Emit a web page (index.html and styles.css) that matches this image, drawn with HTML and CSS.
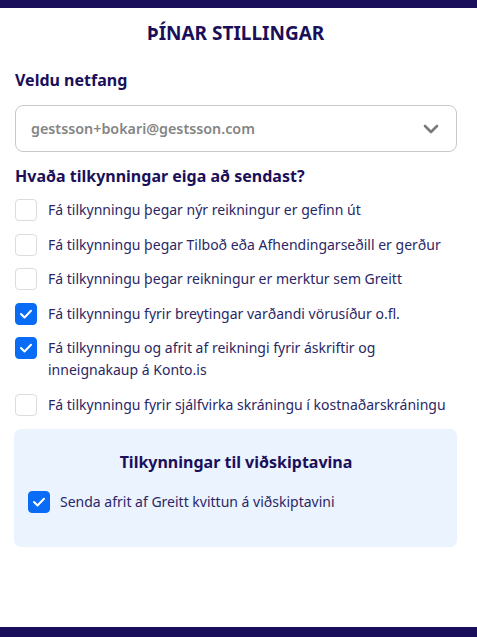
FILE: index.html
```html
<!DOCTYPE html>
<html lang="is">
<head>
<meta charset="utf-8">
<link rel="stylesheet" href="styles.css">
</head>
<body>
<div class="page">
  <div class="topbar"></div>
  <main class="content">
    <h1 class="title">ÞÍNAR STILLINGAR</h1>
    <h2 class="label">Veldu netfang</h2>
    <div class="select">
      <span class="select-value">gestsson+bokari@gestsson.com</span>
      <svg class="chevron" width="16" height="10" viewBox="0 0 16 10"><path d="M2 2 L8 8 L14 2" fill="none" stroke="#7a7a7a" stroke-width="2.6" stroke-linecap="round" stroke-linejoin="round"/></svg>
    </div>
    <h2 class="label label-q">Hvaða tilkynningar eiga að sendast?</h2>
    <ul class="options">
      <li class="opt"><span class="box"></span><span class="text">Fá tilkynningu þegar nýr reikningur er gefinn út</span></li>
      <li class="opt"><span class="box"></span><span class="text">Fá tilkynningu þegar Tilboð eða Afhendingarseðill er gerður</span></li>
      <li class="opt"><span class="box"></span><span class="text">Fá tilkynningu þegar reikningur er merktur sem Greitt</span></li>
      <li class="opt"><span class="box checked"><svg width="14" height="10" viewBox="0 0 14 10"><path d="M2 5 L5.5 8.5 L12 1.8" fill="none" stroke="#fff" stroke-width="2" stroke-linecap="round" stroke-linejoin="round"/></svg></span><span class="text">Fá tilkynningu fyrir breytingar varðandi vörusíður o.fl.</span></li>
      <li class="opt"><span class="box checked"><svg width="14" height="10" viewBox="0 0 14 10"><path d="M2 5 L5.5 8.5 L12 1.8" fill="none" stroke="#fff" stroke-width="2" stroke-linecap="round" stroke-linejoin="round"/></svg></span><span class="text">Fá tilkynningu og afrit af reikningi fyrir áskriftir og inneignakaup á Konto.is</span></li>
      <li class="opt"><span class="box"></span><span class="text">Fá tilkynningu fyrir sjálfvirka skráningu í kostnaðarskráningu</span></li>
    </ul>
    <section class="panel">
      <h3 class="panel-title">Tilkynningar til viðskiptavina</h3>
      <div class="opt"><span class="box checked"><svg width="14" height="10" viewBox="0 0 14 10"><path d="M2 5 L5.5 8.5 L12 1.8" fill="none" stroke="#fff" stroke-width="2" stroke-linecap="round" stroke-linejoin="round"/></svg></span><span class="text">Senda afrit af Greitt kvittun á viðskiptavini</span></div>
    </section>
  </main>
  <div class="bottombar"></div>
</div>
</body>
</html>
```

FILE: styles.css
```css
* { box-sizing: border-box; }
html, body { margin: 0; padding: 0; }
body {
  font-family: "Noto Sans", "Open Sans", sans-serif;
  color: #2a2766;
  background: #fff;
}
.page {
  height: 637px;
  display: flex;
  flex-direction: column;
}
.topbar { height: 8px; background: #1a0f5a; flex: none; }
.bottombar { height: 10px; background: #1a0f5a; flex: none; }
.content {
  flex: 1;
  padding: 0 20px 0 14px;
}
.title {
  margin: 12px 0 0;
  text-align: center;
  font-size: 19px;
  line-height: 26px;
  font-weight: 700;
  color: #1a0f5a;
}
.label {
  margin: 23px 0 0 1px;
  font-size: 16px;
  line-height: 22px;
  font-weight: 700;
  color: #1a0f5a;
}
.select {
  margin: 14px 0 0 1px;
  height: 47px;
  border: 1px solid #c8c8c8;
  border-radius: 8px;
  display: flex;
  align-items: center;
  justify-content: space-between;
  padding: 0 17px 0 15px;
}
.select-value {
  font-size: 14.3px;
  font-weight: 600;
  color: #858585;
}
.label-q { margin-top: 13px; }
.options {
  list-style: none;
  margin: 12px 0 0;
  padding: 0;
  display: flex;
  flex-direction: column;
  gap: 12.5px;
}
.opt {
  display: flex;
  align-items: flex-start;
  gap: 11px;
  font-size: 14px;
  line-height: 22px;
  padding-left: 1px;
}
.box {
  flex: none;
  width: 22px;
  height: 22px;
  border: 1px solid #dcdcdc;
  border-radius: 4px;
  background: #fff;
  display: flex;
  align-items: center;
  justify-content: center;
}
.box.checked { background: #0a6cf5; border-color: #0a6cf5; }
.panel {
  margin-top: 13px;
  background: #ebf3fe;
  border-radius: 7px;
  padding: 22px 12px 34px 13px;
}
.panel-title {
  margin: 0 0 18px;
  text-align: center;
  font-size: 16px;
  line-height: 22px;
  font-weight: 700;
  color: #1a0f5a;
}
.panel .opt { gap: 10px; }
```
